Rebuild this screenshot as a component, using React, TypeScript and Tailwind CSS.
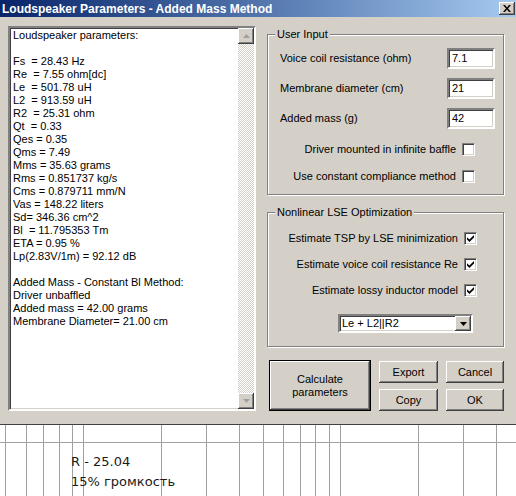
import React from 'react';

// Windows-classic 3D edges
const raised =
  'bg-[#d4d0c8] shadow-[inset_-1px_-1px_0_#404040,inset_1px_1px_0_#ffffff,inset_-2px_-2px_0_#808080,inset_2px_2px_0_#d4d0c8]';
const sunken =
  'bg-white border-2 border-t-[#808080] border-l-[#808080] border-b-white border-r-white shadow-[inset_1px_1px_0_#404040,inset_-1px_-1px_0_#d4d0c8]';

const reportLines = [
  'Loudspeaker parameters:',
  '',
  'Fs  = 28.43 Hz',
  'Re  = 7.55 ohm[dc]',
  'Le  = 501.78 uH',
  'L2  = 913.59 uH',
  'R2  = 25.31 ohm',
  'Qt  = 0.33',
  'Qes = 0.35',
  'Qms = 7.49',
  'Mms = 35.63 grams',
  'Rms = 0.851737 kg/s',
  'Cms = 0.879711 mm/N',
  'Vas = 148.22 liters',
  'Sd= 346.36 cm^2',
  'Bl  = 11.795353 Tm',
  'ETA = 0.95 %',
  'Lp(2.83V/1m) = 92.12 dB',
  '',
  'Added Mass - Constant Bl Method:',
  'Driver unbaffled',
  'Added mass = 42.00 grams',
  'Membrane Diameter= 21.00 cm',
];

// column widths of the grid underneath the dialog (each cell owns its right line)
const gridCols = [
  'w-[6px]', 'w-[21px]', 'w-[17px]', 'w-[16px]', 'w-[13px]', 'w-[11px]',
  'w-[78px]', 'w-[45px]', 'w-[33px]', 'w-[24px]', 'w-[20px]', 'w-[17px]',
  'w-[15px]', 'w-[14px]', 'w-[11px]', 'w-[78px]', 'w-[45px]', 'w-[33px]',
];

const Arrow = ({ down, color }: { down?: boolean; color: string }) => (
  <svg width="7" height="4" viewBox="0 0 7 4" className={down ? '' : 'rotate-180'}>
    <path d="M0 0h7L3.5 4z" fill={color} />
  </svg>
);

const CheckBox = ({ checked }: { checked?: boolean }) => (
  <span className="w-[13px] h-[13px] shrink-0 bg-white border border-t-[#808080] border-l-[#808080] border-b-white border-r-white shadow-[inset_1px_1px_0_#404040,inset_-1px_-1px_0_#d4d0c8] flex items-center justify-center">
    {checked && (
      <svg width="7" height="7" viewBox="0 0 7 7">
        <path d="M0 2.2 L2.4 4.6 L7 0 V2.4 L2.4 7 L0 4.6Z" fill="#000" />
      </svg>
    )}
  </span>
);

const GroupBox = ({ title, className, children }: { title: string; className: string; children: React.ReactNode }) => (
  <div className={`relative border border-[#808080] shadow-[1px_1px_0_#ffffff,inset_1px_1px_0_#ffffff] ${className}`}>
    <span className="absolute -top-[7px] left-[7px] px-[2px] bg-[#d4d0c8] leading-[13px]">{title}</span>
    {children}
  </div>
);

const InputRow = ({ label, value }: { label: string; value: string }) => (
  <div className="flex items-center justify-between pl-[12px] pr-[8px]">
    <span>{label}</span>
    <span className={`${sunken} w-[48px] h-[21px] flex items-center pl-[3px]`}>{value}</span>
  </div>
);

const CheckRow = ({ label, checked, pr }: { label: string; checked?: boolean; pr: string }) => (
  <div className={`flex items-center justify-end gap-[6px] h-[13px] ${pr}`}>
    <span>{label}</span>
    <CheckBox checked={checked} />
  </div>
);

export default function App() {
  return (
    <div className="w-[516px] h-[496px] bg-white flex flex-col overflow-hidden font-['Liberation_Sans',Arial,sans-serif] text-[11px] text-black">
      {/* dialog */}
      <div className="h-[425px] shrink-0 bg-[#d4d0c8] flex flex-col border-b border-[#404040]">
        <div className="h-[17px] shrink-0 flex items-center justify-between pl-[2px] pr-[1px] bg-gradient-to-r from-[#0a246a] to-[#a6caf0]">
          <span className="text-white font-bold text-[12px] leading-none">Loudspeaker Parameters - Added Mass Method</span>
          <span className={`${raised} w-[16px] h-[13px] flex items-center justify-center`}>
            <svg width="8" height="7" viewBox="0 0 8 7">
              <path d="M0 0h2l2 2.5L6 0h2L5 3.5 8 7H6L4 4.5 2 7H0l3-3.5z" fill="#000" />
            </svg>
          </span>
        </div>

        <div className="flex flex-1 pl-[8px] pt-[9px]">
          {/* report text area */}
          <div className={`${sunken} w-[248px] h-[385px] flex`}>
            <div className="flex-1 pl-[3px] pt-[1px] leading-[13px] whitespace-pre">
              {reportLines.map((line, i) => (
                <div key={i} className="h-[13px]">{line}</div>
              ))}
            </div>
            <div className="w-[16px] flex flex-col">
              <div className={`${raised} h-[16px] flex items-center justify-center`}>
                <Arrow color="#a0a0a0" />
              </div>
              <div className="flex-1 bg-[repeating-conic-gradient(#d4d0c8_0_25%,#ffffff_0_50%)] bg-[length:2px_2px]" />
              <div className={`${raised} h-[16px] flex items-center justify-center`}>
                <Arrow down color="#a0a0a0" />
              </div>
            </div>
          </div>

          {/* right column */}
          <div className="ml-[11px] mt-[8px] w-[237px] flex flex-col">
            <GroupBox title="User Input" className="h-[161px] pt-[13px] flex flex-col">
              <div className="flex flex-col gap-[9px]">
                <InputRow label="Voice coil resistance (ohm)" value="7.1" />
                <InputRow label="Membrane diameter (cm)" value="21" />
                <InputRow label="Added mass (g)" value="42" />
              </div>
              <div className="flex flex-col gap-[14px] mt-[14px]">
                <CheckRow label="Driver mounted in infinite baffle" pr="pr-[28px]" />
                <CheckRow label="Use constant compliance method" pr="pr-[28px]" />
              </div>
            </GroupBox>

            <GroupBox title="Nonlinear LSE Optimization" className="mt-[17px] h-[135px] pt-[19px] flex flex-col">
              <div className="flex flex-col gap-[13px]">
                <CheckRow label="Estimate TSP by LSE minimization" checked pr="pr-[26px]" />
                <CheckRow label="Estimate voice coil resistance Re" checked pr="pr-[26px]" />
                <CheckRow label="Estimate lossy inductor model" checked pr="pr-[26px]" />
              </div>
              <div className="mt-[17px] flex justify-end pr-[30px]">
                <div className={`${sunken} w-[135px] h-[19px] flex items-center justify-between`}>
                  <span className="pl-[2px]">Le + L2||R2</span>
                  <span className={`${raised} w-[16px] h-full flex items-center justify-center`}>
                    <Arrow down color="#000" />
                  </span>
                </div>
              </div>
            </GroupBox>

            <div className="mt-[13px] flex gap-[8px] pl-[2px]">
              <div className="w-[102px] h-[51px] border border-black">
                <div className={`${raised} w-full h-full flex items-center justify-center text-center leading-[13px]`}>
                  Calculate<br />parameters
                </div>
              </div>
              <div className="flex flex-col gap-[6px] pt-[1px]">
                <div className={`${raised} w-[59px] h-[22px] flex items-center justify-center`}>Export</div>
                <div className={`${raised} w-[59px] h-[22px] flex items-center justify-center`}>Copy</div>
              </div>
              <div className="flex flex-col gap-[6px] pt-[1px]">
                <div className={`${raised} w-[58px] h-[22px] flex items-center justify-center`}>Cancel</div>
                <div className={`${raised} w-[58px] h-[22px] flex items-center justify-center`}>OK</div>
              </div>
            </div>
          </div>
        </div>
      </div>

      {/* sheet underneath */}
      <div className="relative flex-1 flex flex-col">
        <div className="h-[18px] shrink-0 flex border-b border-[#a0a0a0]">
          {gridCols.map((w, i) => (
            <div key={i} className={`${w} shrink-0 border-r border-[#a0a0a0]`} />
          ))}
          <div className="flex-1" />
        </div>
        <div className="flex-1 flex">
          {gridCols.map((w, i) => (
            <div key={i} className={`${w} shrink-0 border-r border-[#a0a0a0]`} />
          ))}
          <div className="flex-1" />
        </div>
        <div className="absolute left-[71px] top-[27px] font-['DejaVu_Sans',sans-serif] text-[13px] leading-[20px] text-[#1a1a1a]">
          <div>R - 25.04</div>
          <div>15% громкость</div>
        </div>
      </div>
    </div>
  );
}
